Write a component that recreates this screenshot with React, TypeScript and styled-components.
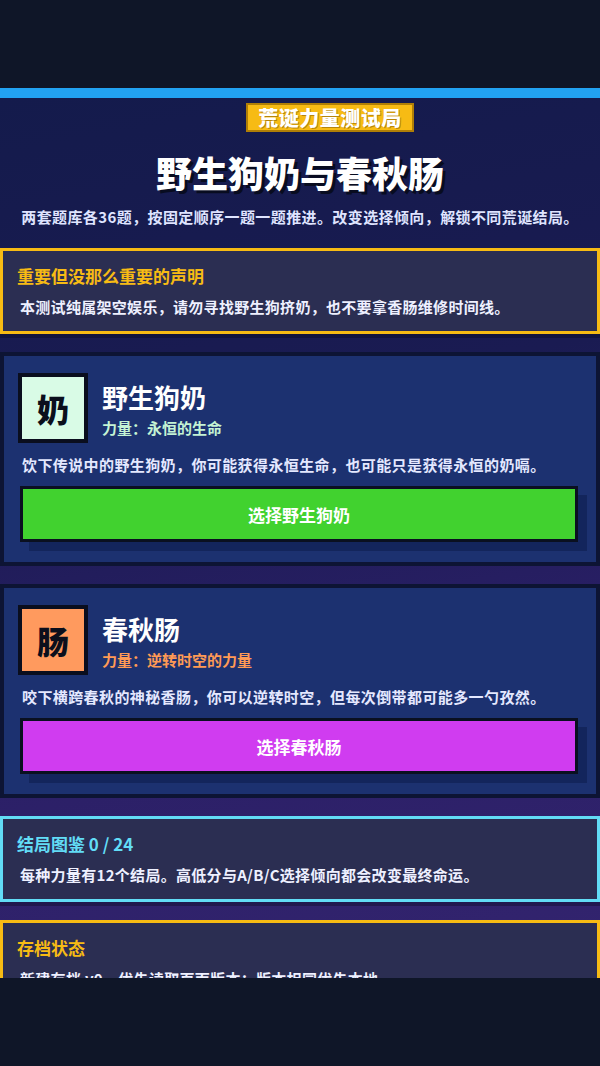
import styled, { createGlobalStyle } from "styled-components"

const GlobalStyle = createGlobalStyle`
  html, body {
    margin: 0;
    padding: 0;
    background: #0f1628;
  }
  * {
    box-sizing: border-box;
  }
  body {
    font-family: "Noto Sans CJK SC", "Noto Sans", sans-serif;
    font-weight: 700;
  }
`

interface Power {
  glyph: string
  name: string
  power: string
  desc: string
  action: string
  iconBg: string
  accent: string
  buttonBg: string
}

const powers: Power[] = [
  {
    glyph: "奶",
    name: "野生狗奶",
    power: "力量：永恒的生命",
    desc: "饮下传说中的野生狗奶，你可能获得永恒生命，也可能只是获得永恒的奶嗝。",
    action: "选择野生狗奶",
    iconBg: "#d9fbe6",
    accent: "#c4f3d4",
    buttonBg: "#41d22f",
  },
  {
    glyph: "肠",
    name: "春秋肠",
    power: "力量：逆转时空的力量",
    desc: "咬下横跨春秋的神秘香肠，你可以逆转时空，但每次倒带都可能多一勺孜然。",
    action: "选择春秋肠",
    iconBg: "#ff9a5e",
    accent: "#ff9a55",
    buttonBg: "#d03cf0",
  },
]

const App = () => {
  return (
    <>
      <GlobalStyle />
      <Screen>
        <TopBar />
        <Main>
          <Header>
            <Badge>荒诞力量测试局</Badge>
            <Title>野生狗奶与春秋肠</Title>
            <Subtitle>
              两套题库各36题，按固定顺序一题一题推进。改变选择倾向，解锁不同荒诞结局。
            </Subtitle>
          </Header>

          <Notice $border="#f7bb14">
            <NoticeTitle $color="#f7bb14">重要但没那么重要的声明</NoticeTitle>
            <NoticeText>
              本测试纯属架空娱乐，请勿寻找野生狗挤奶，也不要拿香肠维修时间线。
            </NoticeText>
          </Notice>

          {powers.map(p => (
            <Card key={p.name}>
              <CardHead>
                <IconBox $bg={p.iconBg}>{p.glyph}</IconBox>
                <CardTitles>
                  <CardName>{p.name}</CardName>
                  <CardPower $color={p.accent}>{p.power}</CardPower>
                </CardTitles>
              </CardHead>
              <CardDesc>{p.desc}</CardDesc>
              <ChooseButton $bg={p.buttonBg}>{p.action}</ChooseButton>
            </Card>
          ))}

          <Notice $border="#62dcf6">
            <NoticeTitle $color="#62dcf6">结局图鉴 0 / 24</NoticeTitle>
            <NoticeText>
              每种力量有12个结局。高低分与A/B/C选择倾向都会改变最终命运。
            </NoticeText>
          </Notice>

          <Notice $border="#f7bb14">
            <NoticeTitle $color="#f7bb14">存档状态</NoticeTitle>
            <NoticeText>新建存档 v0，优先读取页面版本；版本相同优先本地。</NoticeText>
          </Notice>
        </Main>
        <BottomBar />
      </Screen>
    </>
  )
}

export default App

const Screen = styled.div`
  height: 1066px;
  display: flex;
  flex-direction: column;
  overflow: hidden;
`
const TopBar = styled.div`
  height: 88px;
  flex: none;
  background: #0f1628;
`
const BottomBar = styled.div`
  height: 88px;
  flex: none;
  background: #0f1628;
`
const Main = styled.main`
  flex: 1;
  overflow: hidden;
  border-top: 10px solid #22a2f2;
  background: linear-gradient(170deg, #141b4c 0%, #1a1b52 35%, #2a1f66 65%, #33246f 100%);
  display: flex;
  flex-direction: column;
  gap: 18px;
`
const Header = styled.header`
  display: flex;
  flex-direction: column;
  align-items: center;
  padding-top: 5px;
  margin-bottom: 2px;
`
const Badge = styled.div`
  margin-left: 60px;
  background: #f7bb14;
  border: 2px solid #b07f06;
  color: #fff;
  font-size: 20px;
  font-weight: 900;
  line-height: 25px;
  padding: 0 10px;
  letter-spacing: 0.5px;
  text-shadow: 1px 1px 0 rgba(120, 80, 0, 0.5);
`
const Title = styled.h1`
  margin: 17px 0 0;
  font-size: 36px;
  line-height: 46px;
  font-weight: 900;
  color: #fff;
  text-shadow: 3px 3px 0 #080c20;
`
const Subtitle = styled.p`
  margin: 11px 0 0;
  font-size: 15px;
  line-height: 22px;
  color: #dfe4ff;
  letter-spacing: 0.4px;
`
const Notice = styled.section<{ $border: string }>`
  flex: none;
  background: #2b2e52;
  border: 3px solid ${p => p.$border};
  padding: 13px 14px 13px;
  box-shadow: 0 4px 0 rgba(5, 8, 25, 0.35);
`
const NoticeTitle = styled.h2<{ $color: string }>`
  margin: 0;
  font-size: 17px;
  line-height: 24px;
  color: ${p => p.$color};
`
const NoticeText = styled.p`
  margin: 8px 0 0;
  padding-left: 3px;
  font-size: 15px;
  line-height: 22px;
  color: #eef0ff;
  letter-spacing: 0.3px;
`
const Card = styled.section`
  flex: none;
  background: #1c3170;
  border: 4px solid #0d1434;
  padding: 17px 14px 20px;
  display: flex;
  flex-direction: column;
`
const CardHead = styled.div`
  display: flex;
  align-items: flex-start;
  gap: 14px;
`
const IconBox = styled.div<{ $bg: string }>`
  width: 70px;
  height: 70px;
  flex: none;
  background: ${p => p.$bg};
  border: 4px solid #0a0e1e;
  display: flex;
  align-items: center;
  justify-content: center;
  font-size: 32px;
  font-weight: 900;
  color: #0b0f1c;
`
const CardTitles = styled.div`
  display: flex;
  flex-direction: column;
  padding-top: 8px;
`
const CardName = styled.h3`
  margin: 0;
  font-size: 26px;
  line-height: 32px;
  color: #fff;
`
const CardPower = styled.div<{ $color: string }>`
  margin-top: 5px;
  font-size: 15px;
  line-height: 20px;
  color: ${p => p.$color};
`
const CardDesc = styled.p`
  margin: 11px 0 0;
  padding-left: 4px;
  font-size: 15px;
  line-height: 22px;
  color: #e4e8ff;
  letter-spacing: 0.4px;
`
const ChooseButton = styled.button<{ $bg: string }>`
  margin: 10px 4px 0 2px;
  height: 56px;
  background: ${p => p.$bg};
  border: 3px solid #0a1020;
  box-shadow: 9px 9px 0 #13255c;
  color: #fff;
  font-family: inherit;
  font-size: 17px;
  font-weight: 700;
  cursor: pointer;
`
